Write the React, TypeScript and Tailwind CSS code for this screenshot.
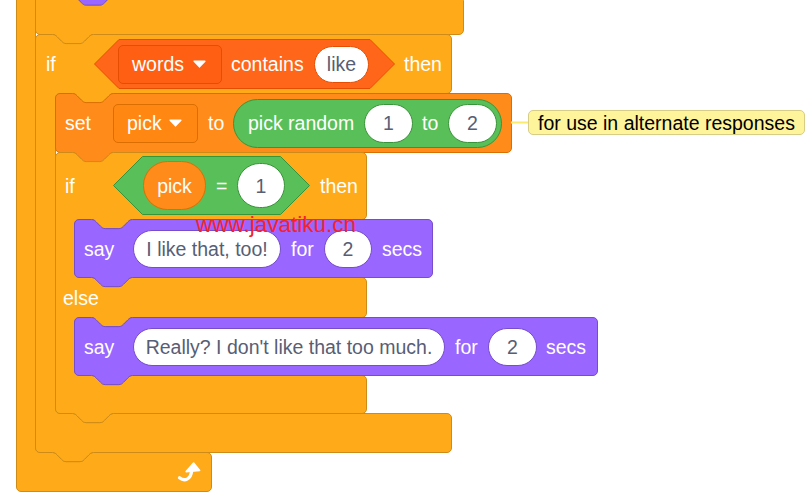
import React from "react";

const N = 1.14;
const f = (v: number) => +v.toFixed(2);
const r = 4.5;
const NS = 17;
const NW = 36 * N;

const notchDown = `c ${f(2 * N)},0 ${f(3 * N)},${f(N)} ${f(4 * N)},${f(2 * N)} l ${f(4 * N)},${f(4 * N)} c ${f(N)},${f(N)} ${f(2 * N)},${f(2 * N)} ${f(4 * N)},${f(2 * N)} h ${f(12 * N)} c ${f(2 * N)},0 ${f(3 * N)},${f(-N)} ${f(4 * N)},${f(-2 * N)} l ${f(4 * N)},${f(-4 * N)} c ${f(N)},${f(-N)} ${f(2 * N)},${f(-2 * N)} ${f(4 * N)},${f(-2 * N)}`;
const bumpLeft = `c ${f(-2 * N)},0 ${f(-3 * N)},${f(N)} ${f(-4 * N)},${f(2 * N)} l ${f(-4 * N)},${f(4 * N)} c ${f(-N)},${f(N)} ${f(-2 * N)},${f(2 * N)} ${f(-4 * N)},${f(2 * N)} h ${f(-12 * N)} c ${f(-2 * N)},0 ${f(-3 * N)},${f(-N)} ${f(-4 * N)},${f(-2 * N)} l ${f(-4 * N)},${f(-4 * N)} c ${f(-N)},${f(-N)} ${f(-2 * N)},${f(-2 * N)} ${f(-4 * N)},${f(-2 * N)}`;

function stack(L: number, T: number, R: number, E: number) {
  return `M ${L},${T + r} a ${r},${r} 0 0 1 ${r},${-r} H ${L + NS} ${notchDown} H ${R - r} a ${r},${r} 0 0 1 ${r},${r} V ${E - r} a ${r},${r} 0 0 1 ${-r},${r} H ${L + NS + NW} ${bumpLeft} H ${L + r} a ${r},${r} 0 0 1 ${-r},${-r} Z`;
}

type Sec = { B: number; R: number; H: number };

function cblock(L: number, T: number, arm: number, R0: number, H0: number, secs: Sec[], cap = false) {
  const IL = L + arm;
  let d = `M ${L},${T + r} a ${r},${r} 0 0 1 ${r},${-r} H ${L + NS} ${notchDown} `;
  d += `H ${R0 - r} a ${r},${r} 0 0 1 ${r},${r} V ${H0 - r} a ${r},${r} 0 0 1 ${-r},${r} `;
  for (const s of secs) {
    d += `H ${IL + NS + NW} ${bumpLeft} H ${IL + r} a ${r},${r} 0 0 0 ${-r},${r} V ${s.B - r} a ${r},${r} 0 0 0 ${r},${r} H ${IL + NS} ${notchDown} H ${s.R - r} a ${r},${r} 0 0 1 ${r},${r} V ${s.H - r} a ${r},${r} 0 0 1 ${-r},${r} `;
  }
  if (!cap) d += `H ${L + NS + NW} ${bumpLeft} `;
  d += `H ${L + r} a ${r},${r} 0 0 1 ${-r},${-r} Z`;
  return d;
}

const CTRL = { fill: "#FFAB19", stroke: "#CF8B17" };
const LOOKS = { fill: "#9966FF", stroke: "#774DCB" };
const VARS = { fill: "#FF8C1A", stroke: "#DB6E00" };

function Label({ className = "", children }: { className?: string; children: React.ReactNode }) {
  return (
    <span className={`shrink-0 whitespace-nowrap pt-[2px] text-[19.5px] leading-none text-white ${className}`}>{children}</span>
  );
}

function Pill({ className = "", children }: { className?: string; children: React.ReactNode }) {
  return (
    <div
      className={`flex shrink-0 items-center justify-center whitespace-nowrap rounded-full border bg-white pt-[2px] text-[19.5px] leading-none text-[#575E75] ${className}`}
    >
      {children}
    </div>
  );
}

function Arrow() {
  return (
    <svg width="13" height="8" viewBox="0 0 13 8" className="ml-auto mr-[15px] shrink-0">
      <path d="M1.2 1.2 H11.8 L6.5 6.8 Z" fill="#fff" stroke="#fff" strokeWidth="1.6" strokeLinejoin="round" />
    </svg>
  );
}

function Hex({
  w,
  h,
  fill,
  stroke,
  className,
  children,
}: {
  w: number;
  h: number;
  fill: string;
  stroke: string;
  className: string;
  children: React.ReactNode;
}) {
  const m = h / 2;
  return (
    <div className={`relative flex shrink-0 items-center ${className}`}>
      <svg className="absolute left-0 top-0" width={w} height={h} viewBox={`0 0 ${w} ${h}`}>
        <path
          d={`M0.5 ${m} L${m} 0.5 H${w - m} L${w - 0.5} ${m} L${w - m} ${h - 0.5} H${m} Z`}
          fill={fill}
          stroke={stroke}
        />
      </svg>
      <div className="relative flex items-center">{children}</div>
    </div>
  );
}

export default function App() {
  return (
    <div className="relative h-[504px] w-[810px] overflow-hidden bg-white font-['Liberation_Sans',Arial,sans-serif]">
      <svg className="absolute left-0 top-0" width="810" height="504" viewBox="0 0 810 504">
        {/* outer forever */}
        <path d={cblock(16.5, -300, 19, 400, -200, [{ B: 452.5, R: 211.5, H: 491.5 }], true)} fill={CTRL.fill} stroke={CTRL.stroke} />
        {/* top if (cut off) */}
        <path d={cblock(35.5, -400, 20, 463.5, -300, [{ B: -4, R: 463.5, H: 34.5 }])} fill={CTRL.fill} stroke={CTRL.stroke} />
        <path d={stack(55.5, -80, 320, -4)} fill={LOOKS.fill} stroke={LOOKS.stroke} />
        {/* if words contains like */}
        <path d={cblock(35.5, 34.5, 20, 451.5, 93.5, [{ B: 413.5, R: 451.5, H: 452.5 }])} fill={CTRL.fill} stroke={CTRL.stroke} />
        {/* set pick */}
        <path d={stack(55.5, 93.5, 511.5, 152.5)} fill={VARS.fill} stroke={VARS.stroke} />
        {/* if else */}
        <path
          d={cblock(55.5, 152.5, 19, 366.5, 219.5, [
            { B: 277.5, R: 366.5, H: 317.5 },
            { B: 375.5, R: 366.5, H: 413.5 },
          ])}
          fill={CTRL.fill}
          stroke={CTRL.stroke}
        />
        <path d={stack(74.5, 219.5, 432.5, 277.5)} fill={LOOKS.fill} stroke={LOOKS.stroke} />
        <path d={stack(74.5, 317.5, 597.5, 375.5)} fill={LOOKS.fill} stroke={LOOKS.stroke} />
        {/* comment connector */}
        <line x1="511" y1="122.5" x2="529" y2="122.5" stroke="#FBEA6E" strokeWidth="2" />
        {/* loop arrow */}
        <path d="M179.5 477.8 C 184.5 481.8, 190.8 479.5, 191.6 471.2" stroke="#fff" strokeWidth="3.3" fill="none" strokeLinecap="round" />
        <path d="M186.2 471.6 L 193.6 463 L 199.6 470.4 Z" fill="#fff" stroke="#fff" strokeWidth="1.6" strokeLinejoin="round" />
      </svg>

      {/* Row A: if words contains like then */}
      <div className="absolute left-[35px] top-[35px] flex h-[58px] items-center">
        <Label className="ml-[11px] w-[48px]">if</Label>
        <Hex w={301} h={50} fill="#FF661A" stroke="#E64D00" className="h-[50px] w-[301px] pl-[24px]">
          <div className="flex h-[39px] w-[104px] shrink-0 items-center rounded-[5px] border border-[#E64D00] bg-[#FF5F12] pl-[13px]">
            <Label>words</Label>
            <Arrow />
          </div>
          <Label className="w-[92px] pl-[9px]">contains</Label>
          <Pill className="h-[37px] w-[55px] border-[#E64D00]">like</Pill>
        </Hex>
        <Label className="ml-[9px]">then</Label>
      </div>

      {/* Row B: set pick to pick random 1 to 2 */}
      <div className="absolute left-[55px] top-[94px] flex h-[58px] items-center">
        <Label className="ml-[10px] w-[48px]">set</Label>
        <div className="flex h-[39px] w-[85px] shrink-0 items-center rounded-[5px] border border-[#DB6E00] bg-[#FF8712] pl-[13px]">
          <Label>pick</Label>
          <Arrow />
        </div>
        <Label className="w-[35px] pl-[10px]">to</Label>
        <div className="flex h-[49px] w-[269px] shrink-0 items-center rounded-full border border-[#389438] bg-[#59C059] pl-[14px]">
          <Label className="w-[116px]">pick random</Label>
          <Pill className="h-[39px] w-[49px] border-[#389438]">1</Pill>
          <Label className="w-[35px] pl-[9px]">to</Label>
          <Pill className="h-[39px] w-[49px] border-[#389438]">2</Pill>
        </div>
      </div>

      {/* comment */}
      <div className="absolute left-[528px] top-[110px] flex h-[25px] w-[277px] items-center rounded-[5px] border border-[#D8CD86] bg-[#FEF49C] pl-[9px]">
        <span className="whitespace-nowrap pt-[2px] text-[19.5px] leading-none text-black">for use in alternate responses</span>
      </div>

      {/* Row C: if pick = 1 then */}
      <div className="absolute left-[55px] top-[152px] flex h-[67px] items-center">
        <Label className="ml-[10px] w-[48px]">if</Label>
        <Hex w={197} h={59} fill="#59C059" stroke="#389438" className="h-[59px] w-[197px] pl-[30px]">
          <div className="flex h-[49px] w-[63px] shrink-0 items-center justify-center rounded-full border border-[#DB6E00] bg-[#FF8C1A]">
            <Label>pick</Label>
          </div>
          <Label className="w-[31px] pl-[10px]">=</Label>
          <Pill className="h-[45px] w-[48px] border-[#389438]">1</Pill>
        </Hex>
        <Label className="ml-[10px]">then</Label>
      </div>

      {/* Row D: say I like that, too! */}
      <div className="absolute left-[74px] top-[220px] flex h-[58px] items-center">
        <Label className="ml-[10px] w-[49px]">say</Label>
        <Pill className="h-[38px] w-[148px] border-[#774DCB]">I like that, too!</Pill>
        <Label className="w-[43px] pl-[10px]">for</Label>
        <Pill className="h-[38px] w-[48px] border-[#774DCB]">2</Pill>
        <Label className="ml-[10px]">secs</Label>
      </div>

      {/* else */}
      <div className="absolute left-[55px] top-[278px] flex h-[40px] items-center">
        <Label className="ml-[8px]">else</Label>
      </div>

      {/* Row F */}
      <div className="absolute left-[74px] top-[318px] flex h-[58px] items-center">
        <Label className="ml-[10px] w-[49px]">say</Label>
        <Pill className="h-[38px] w-[312px] border-[#774DCB]">Really? I don&apos;t like that too much.</Pill>
        <Label className="w-[43px] pl-[10px]">for</Label>
        <Pill className="h-[38px] w-[49px] border-[#774DCB]">2</Pill>
        <Label className="ml-[9px]">secs</Label>
      </div>

      {/* watermark */}
      <div className="absolute left-[196px] top-[214px] whitespace-nowrap text-[22.5px] leading-none text-[#F5222D]">
        www.javatiku.cn
      </div>
    </div>
  );
}
